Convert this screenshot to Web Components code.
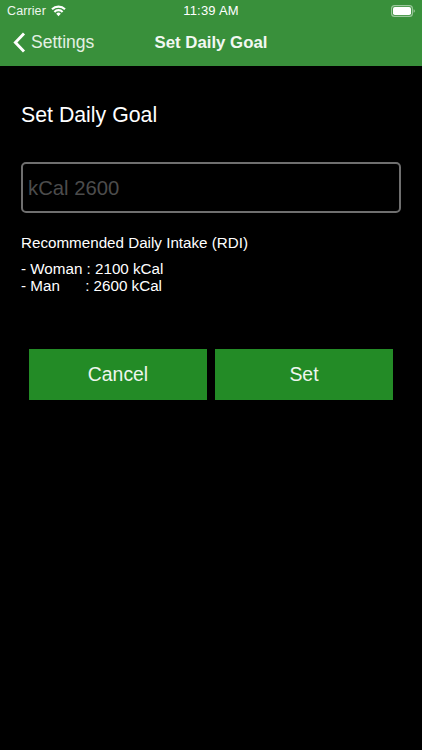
<!DOCTYPE html>
<html><head><meta charset="utf-8">
<style>
html,body{margin:0;padding:0;background:#000;height:100%;overflow:hidden}
body{font-family:"Liberation Sans",Arial,sans-serif;color:#fff}
</style></head><body>
<goal-app>
  <nav-header></nav-header>
  <goal-form></goal-form>
</goal-app>
<script>
function def(name, html){
  customElements.define(name, class extends HTMLElement{
    constructor(){super();this.attachShadow({mode:'open'}).innerHTML=html;}
  });
}
def('goal-app',`<style>:host{display:flex;flex-direction:column;width:422px;height:750px;background:#000}</style><slot></slot>`);
def('status-bar',`<style>
:host{display:grid;grid-template-columns:1fr auto 1fr;align-items:center;height:21px;padding:0 7px 0 7px;font-size:12.5px;color:#fff;box-sizing:border-box}
.l{display:flex;align-items:center;gap:5px;letter-spacing:.1px;color:#eef6ee}
.c{font-weight:400;font-size:13px;letter-spacing:.2px}
.r{display:flex;justify-content:flex-end}
svg{display:block}
</style>
<div class="l"><span>Carrier</span>
<svg width="15" height="12" viewBox="0 0 15 12"><path d="M1 4.3 A9.2 9.2 0 0 1 14 4.3" fill="none" stroke="#fff" stroke-width="2.1"/><path d="M3.4 6.9 A5.7 5.7 0 0 1 11.6 6.9" fill="none" stroke="#fff" stroke-width="2.1"/><path d="M5.2 8.8 A3.2 3.2 0 0 1 9.8 8.8 L7.5 11.3Z" fill="#fff"/></svg></div>
<div class="c">11:39 AM</div>
<div class="r"><svg width="24" height="12" viewBox="0 0 24 12"><rect x=".6" y=".6" width="20.8" height="10.8" rx="3" fill="none" stroke="#fff" stroke-opacity=".5" stroke-width="1.1"/><rect x="2" y="2" width="18" height="8" rx="1.8" fill="#fff"/><path d="M22.6 4.2c.8.3 1.2 1 1.2 1.8s-.4 1.5-1.2 1.8z" fill="#fff" fill-opacity=".55"/></svg></div>`);
def('nav-header',`<style>
:host{display:block;background:#39903b;height:66px;box-sizing:border-box}
.bar{display:grid;grid-template-columns:1fr auto 1fr;align-items:center;height:45px;padding:0 13px 2px 13px;box-sizing:border-box}
.back{display:flex;align-items:center;gap:5px;font-size:17.5px;color:#e4f0e4}
.t{font-size:16.8px;font-weight:700;color:#f2f8f2}
svg{display:block}
</style>
<status-bar></status-bar>
<div class="bar"><div class="back"><svg width="13" height="21" viewBox="0 0 13 21"><path d="M11 1.6 L2.4 10.5 L11 19.4" fill="none" stroke="#fff" stroke-width="2.9"/></svg><span>Settings</span></div><div class="t">Set Daily Goal</div><div></div></div>`);
def('goal-form',`<style>
:host{display:block;padding:36px 21px 0;font-size:15.2px}
h1{margin:0;font-size:21.3px;font-weight:400;line-height:26px;color:#fff}
.input{box-sizing:border-box;margin-top:34px;height:51px;border:2px solid #6f6f6f;border-radius:5px;padding:2px 5px 0;display:flex;align-items:center;font-size:20.3px;color:#4c4c4c}
.rdi{margin-top:21px;line-height:17px}
.list{margin-top:9px;line-height:17px}
.k{display:block;white-space:pre}
.btns{display:flex;gap:8px;margin:55px 8px 0}
</style>
<h1>Set Daily Goal</h1>
<div class="input">kCal 2600</div>
<div class="rdi">Recommended Daily Intake (RDI)</div>
<div class="list"><span class="k">- Woman : 2100 kCal</span><span class="k">- Man      : 2600 kCal</span></div>
<div class="btns"><action-button>Cancel</action-button><action-button>Set</action-button></div>`);
def('action-button',`<style>
:host{flex:1;display:flex;align-items:center;justify-content:center;height:51px;background:#238b26;color:#eef6ee;font-size:19.4px}
</style><slot></slot>`);
</script>
</body></html>
